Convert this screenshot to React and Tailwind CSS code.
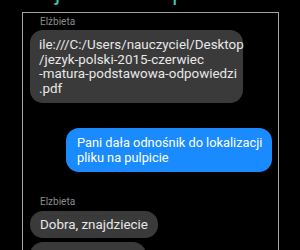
import React from "react";

const font = { fontFamily: "Roboto, 'Noto Sans', sans-serif" };

function Label({ children }) {
  return (
    <div className="pl-[17px] text-[10px] leading-[12px] text-[#8c8c8c]">
      {children}
    </div>
  );
}

export default function App() {
  return (
    <div
      className="w-[300px] h-[250px] bg-black overflow-hidden flex flex-col"
      style={font}
    >
      {/* cut-off title descenders */}
      <div className="h-[12px] overflow-hidden shrink-0">
        <div className="flex mt-[-19px] text-[22px] leading-[24px] text-[#3fc6bf]">
          <span className="pl-[55px]">j</span>
          <span className="pl-[112px]">p</span>
        </div>
      </div>

      {/* chat frame */}
      <div className="ml-[22px] w-[257px] flex-1 border-l border-t border-r border-[#a3a3a3] pt-[3px] flex flex-col">
        <Label>Elżbieta</Label>

        <div className="mt-[2px] ml-[7px] w-[213px] rounded-[13px] bg-[#3a3a3a] pl-[9px] pr-[4px] pt-[8px] pb-[7px] text-[13.4px] leading-[14.5px] text-[#e8e8e8]">
          <div>ile:///C:/Users/nauczyciel/Desktop</div>
          <div>/jezyk-polski-2015-czerwiec</div>
          <div>-matura-podstawowa-odpowiedzi</div>
          <div>.pdf</div>
        </div>

        <div className="mt-[25px] self-end mr-[6px] w-[206px] rounded-[13px] bg-[#1a8bff] pl-[11px] pr-[4px] pt-[7px] pb-[7px] text-[12.8px] leading-[15px] text-white">
          <div>Pani dała odnośnik do lokalizacji</div>
          <div>pliku na pulpicie</div>
        </div>

        <div className="mt-[24px]">
          <Label>Elzbieta</Label>
        </div>

        <div className="mt-[3px] ml-[7px] self-start rounded-[13px] bg-[#3a3a3a] px-[10px] py-[5px] text-[13.4px] leading-[17px] text-[#e8e8e8]">
          Dobra, znajdziecie
        </div>

        <div className="mt-[4px] ml-[7px] w-[116px] h-[20px] rounded-t-[13px] bg-[#3a3a3a]" />
      </div>
    </div>
  );
}
